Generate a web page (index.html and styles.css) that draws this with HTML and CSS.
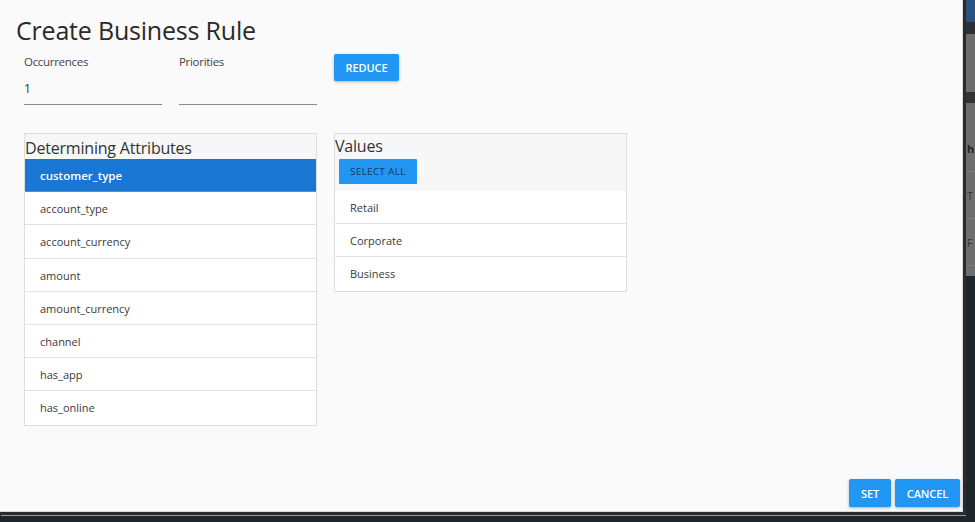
FILE: index.html
```html
<!DOCTYPE html>
<html>
<head>
<meta charset="utf-8">
<link rel="stylesheet" href="styles.css">
</head>
<body>
<div class="screen">
  <div class="dialog">
    <h1 class="title">Create Business Rule</h1>
    <div class="top-row">
      <div class="field">
        <label class="field-label">Occurrences</label>
        <div class="field-input">1</div>
      </div>
      <div class="field">
        <label class="field-label">Priorities</label>
        <div class="field-input"></div>
      </div>
      <button class="btn btn-reduce">REDUCE</button>
    </div>
    <div class="panels">
      <div class="panel panel-attrs">
        <div class="panel-head">Determining Attributes</div>
        <div class="item item-selected">customer_type</div>
        <div class="item">account_type</div>
        <div class="item">account_currency</div>
        <div class="item">amount</div>
        <div class="item">amount_currency</div>
        <div class="item">channel</div>
        <div class="item">has_app</div>
        <div class="item item-last">has_online</div>
      </div>
      <div class="panel panel-values">
        <div class="panel-head values-head">
          <div class="values-title">Values</div>
          <button class="btn-select">SELECT ALL</button>
        </div>
        <div class="item">Retail</div>
        <div class="item">Corporate</div>
        <div class="item item-last">Business</div>
      </div>
    </div>
    <div class="spacer"></div>
    <div class="actions">
      <button class="btn btn-set">SET</button>
      <button class="btn btn-cancel">CANCEL</button>
    </div>
  </div>
  <div class="backdrop">
    <div class="bd-blue"></div>
    <div class="bd-dark1"></div>
    <div class="bd-gray1"></div>
    <div class="bd-dark2"></div>
    <div class="bd-table">
      <div class="bd-row bd-row-head"><span class="bd-h">h</span></div>
      <div class="bd-row"><span class="bd-t">T</span></div>
      <div class="bd-row"><span class="bd-t">F</span></div>
    </div>
  </div>
</div>
</body>
</html>
```
FILE: styles.css
```css
* { box-sizing: border-box; }
html, body { margin: 0; padding: 0; }
body {
  width: 975px;
  height: 522px;
  overflow: hidden;
  background: #1d262b;
  font-family: "Open Sans", "Noto Sans", sans-serif;
}
.screen {
  display: flex;
  height: 522px;
}
.dialog {
  width: 966px;
  height: 515px;
  flex: none;
  background: #fafafa;
  border-right: 3px solid #2b2b2b;
  border-bottom: 3px solid #2b2b2b;
  box-shadow: inset -1px -1px 0 #d8d8d8, 1px 1px 0 #9a9a9a;
  display: flex;
  flex-direction: column;
}
.title {
  margin: 14px 0 0 16px;
  font-weight: 400;
  font-size: 25px;
  line-height: 32px;
  color: #2a2a2a;
  letter-spacing: -0.2px;
}
.top-row {
  display: flex;
  align-items: flex-start;
  margin: 7px 0 0 24px;
}
.field {
  width: 138px;
  margin-right: 17px;
}
.field-label {
  display: block;
  margin-top: 1px;
  font-size: 11.5px;
  line-height: 16px;
  color: #444;
  letter-spacing: -0.3px;
}
.field-input {
  height: 31px;
  margin-top: 4px;
  border-bottom: 1px solid #8a8a8a;
  font-size: 12px;
  line-height: 30px;
  color: #333;
}
.btn {
  border: none;
  background: #2196f3;
  color: #fff;
  font-family: "Open Sans", "Noto Sans", sans-serif;
  font-weight: 600;
  font-size: 11px;
  border-radius: 2px;
  box-shadow: 0 1px 3px rgba(0,0,0,0.3);
  padding: 0;
  cursor: pointer;
  letter-spacing: -0.1px;
}
.btn-reduce {
  width: 65px;
  height: 27px;
  margin-top: 1px;
}
.panels {
  display: flex;
  align-items: flex-start;
  margin: 28px 0 0 24px;
  gap: 17px;
}
.panel {
  background: #fff;
  border: 1px solid #dedede;
}
.panel-attrs { width: 293px; }
.panel-values { width: 293px; }
.panel-head {
  background: #f7f7f7;
  font-size: 16px;
  line-height: 28px;
  color: #333;
  height: 25px;
  letter-spacing: -0.2px;
}
.values-head {
  height: 57px;
}
.values-title {
  line-height: 25px;
}
.btn-select {
  display: block;
  margin: 0 0 0 4px;
  width: 78px;
  height: 25px;
  border: none;
  border-radius: 1px;
  background: #2196f3;
  color: #1f3550;
  font-family: "Open Sans", "Noto Sans", sans-serif;
  font-size: 9.5px;
  letter-spacing: 0.5px;
  padding: 0;
}
.item {
  height: 33.2px;
  line-height: 34px;
  padding-left: 15px;
  font-size: 11px;
  color: #3a3a3a;
  border-bottom: 1px solid #e2e2e2;
}
.item-last { border-bottom: none; }
.item-selected {
  background: #1976d2;
  color: #fff;
  font-weight: 600;
  font-size: 11.5px;
  line-height: 33px;
  border-bottom: 1px solid #4a90d9;
}
.spacer { flex: 1; }
.actions {
  display: flex;
  justify-content: flex-end;
  gap: 4px;
  padding: 0 3px 5px 0;
}
.btn-set { width: 42px; height: 28px; }
.btn-cancel { width: 65px; height: 28px; }

.backdrop {
  flex: 1;
  display: flex;
  flex-direction: column;
  overflow: hidden;
  background: #1d262b;
}
.bd-blue { height: 22px; background: #2c5282; }
.bd-dark1 { height: 12px; background: #2b3136; }
.bd-gray1 { height: 58px; background: #6d6d6d; }
.bd-dark2 { height: 11px; background: #2f3438; }
.bd-table { height: 173px; background: #6e6e6e; }
.bd-row {
  height: 47px;
  border-bottom: 1px solid #7c7c7c;
  font-size: 11px;
  line-height: 47px;
  white-space: nowrap;
  padding-left: 1px;
}
.bd-row-head { height: 69px; line-height: 92px; }
.bd-h { font-weight: 700; color: #1b2430; }
.bd-t { color: #3d2e4a; }
```
